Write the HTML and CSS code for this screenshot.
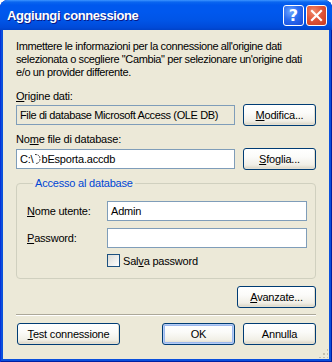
FILE: index.html
```html
<!DOCTYPE html>
<html lang="it">
	<head>
		<meta charset="UTF-8" />
		<meta name="viewport" content="width=device-width, initial-scale=1.0" />
		<title>Aggiungi connessione</title>
		<link rel="stylesheet" href="styles.css">
	</head>
	<body>
		<div class="window">
			<div class="titlebar">
				<span class="title">Aggiungi connessione</span>
				<div class="caption-btns">
					<button class="cap help">?</button>
					<button class="cap close">
						<svg width="13" height="13" viewBox="0 0 13 13">
							<path d="M2 2 L11 11 M11 2 L2 11" stroke="#fff" stroke-width="2.2" stroke-linecap="square" />
						</svg>
					</button>
				</div>
			</div>
			<div class="client">
				<p class="intro">Immettere le informazioni per la connessione all'origine dati selezionata o scegliere "Cambia" per selezionare un'origine dati e/o un provider differente.</p>

				<div class="lbl lbl-first"><u>O</u>rigine dati:</div>
				<div class="row row-first">
					<div class="field readonly">File di database Microsoft Access (OLE DB)</div>
					<button class="btn"><u>M</u>odifica...</button>
				</div>

				<div class="lbl">No<u>m</u>e file di database:</div>
				<div class="row">
					<div class="field">C:\<svg class="caret" width="7" height="12" viewBox="0 0 7 12"><path d="M1 1.5 Q6 1.5 6 6 Q6 10.5 1 10.5" fill="none" stroke="#222" stroke-width="1" stroke-dasharray="1.5 1" /></svg>bEsporta.accdb</div>
					<button class="btn"><u>S</u>foglia...</button>
				</div>

				<fieldset class="group">
					<legend>Accesso al database</legend>
					<div class="frow">
						<span class="flbl"><u>N</u>ome utente:</span>
						<div class="field">Admin</div>
					</div>
					<div class="frow">
						<span class="flbl"><u>P</u>assword:</span>
						<div class="field"></div>
					</div>
					<div class="check">
						<span class="box"></span>
						<span>Sal<u>v</u>a password</span>
					</div>
				</fieldset>

				<div class="adv-row">
					<button class="btn btn-adv"><u>A</u>vanzate...</button>
				</div>

				<div class="sep"></div>

				<div class="bottom">
					<button class="btn btn-test"><u>T</u>est connessione</button>
					<div class="spacer"></div>
					<button class="btn btn-ok">OK</button>
					<button class="btn">Annulla</button>
				</div>
				<div class="grip"></div>
			</div>
		</div>
	</body>
</html>
```

FILE: styles.css
```css
body {
	margin: 0;
	background: #fff;
	font-family: "Liberation Sans", Arial, sans-serif;
	font-size: 11px;
	letter-spacing: -0.2px;
	color: #000;
}

.window {
	width: 332px;
	height: 362px;
	box-sizing: border-box;
	display: flex;
	flex-direction: column;
	background: #0a50dc;
	border-radius: 8px 8px 0 0;
	box-shadow: inset 1px 0 0 #0831d9, inset -1px 0 0 #001ea0, inset 0 -1px 0 #001ea0;
}

.titlebar {
	height: 30px;
	display: flex;
	align-items: center;
	padding: 0 5px 0 7px;
	border-radius: 8px 8px 0 0;
	background: linear-gradient(to bottom, #3d95ff 0, #0a66f0 2px, #0058ee 5px, #0058ee 40%, #0054e6 70%, #004ad8 92%, #0042c8 100%);
	box-sizing: border-box;
}

.title {
	flex: 1;
	color: #fff;
	font-weight: bold;
	font-size: 13px;
	letter-spacing: -0.4px;
	text-shadow: 1px 1px 0 #0a1883;
	padding-top: 1px;
}

.caption-btns {
	display: flex;
	gap: 2px;
}

.cap {
	width: 21px;
	height: 21px;
	padding: 0;
	border: 1px solid #fff;
	border-radius: 3px;
	display: flex;
	align-items: center;
	justify-content: center;
	color: #fff;
	font-family: "DejaVu Sans", sans-serif;
	font-weight: bold;
	font-size: 16px;
}

.help {
	background: radial-gradient(circle at 35% 30%, #6ea5ff 0, #2a6cf0 45%, #1848d8 100%);
}

.close {
	background: radial-gradient(circle at 35% 30%, #f28c6c 0, #e0563b 45%, #c9391e 100%);
}

.client {
	position: relative;
	flex: 1;
	margin: 0 3px 3px 3px;
	background: #ece9d8;
	padding: 10px 13px 0 13px;
	display: flex;
	flex-direction: column;
}

.intro {
	margin: 0;
	line-height: 13px;
	width: 300px;
	letter-spacing: -0.38px;
}

.lbl {
	margin-top: 7px;
	line-height: 13px;
}

.lbl-first {
	margin-top: 11px;
}

.row {
	display: flex;
	align-items: center;
	gap: 8px;
	margin-top: 2px;
}

.row-first {
	margin-top: 1px;
}

.field {
	box-sizing: border-box;
	height: 20px;
	border: 1px solid #7f9db9;
	background: #fff;
	padding: 0 3px;
	display: flex;
	align-items: center;
	white-space: nowrap;
	overflow: hidden;
}

.row .field {
	width: 219px;
}

.field.readonly {
	background: #ece9d8;
	letter-spacing: -0.38px;
}

.caret {
	margin: 0 0 0 1px;
}

.btn {
	box-sizing: border-box;
	height: 22px;
	width: 73px;
	padding: 0;
	font-family: inherit;
	font-size: 11px;
	letter-spacing: inherit;
	color: #000;
	border: 1px solid #003c74;
	border-radius: 3px;
	background: linear-gradient(to bottom, #fff 0, #fbfbf9 40%, #f1efe6 80%, #d8d2c2 100%);
	box-shadow: inset -1px -1px 0 #e3dfd2;
}

.group {
	margin: 7px 0 0 0;
	padding: 11px 8px 11px 10px;
	border: 1px solid #d0d0bf;
	border-radius: 4px;
}

.group legend {
	color: #0046d5;
	padding: 0 2px;
	margin-left: 6px;
	line-height: 13px;
}

.frow {
	display: flex;
	align-items: center;
	margin-bottom: 7px;
}

.flbl {
	width: 80px;
}

.frow .field {
	width: 200px;
}

.check {
	display: flex;
	align-items: center;
	gap: 3px;
	margin-left: 80px;
	margin-top: -1px;
	height: 13px;
}

.box {
	width: 11px;
	height: 11px;
	border: 1px solid #1c5180;
	background: linear-gradient(135deg, #dcdcd7 0, #fff 100%);
}

.adv-row {
	display: flex;
	justify-content: flex-end;
	margin-top: 7px;
}

.btn-adv {
	width: 79px;
}

.sep {
	margin-top: 6px;
	height: 1px;
	background: #aca899;
	border-bottom: 1px solid #fff;
}

.bottom {
	display: flex;
	gap: 8px;
	margin-top: 7px;
	padding-left: 1px;
}

.btn-test {
	width: 103px;
}

.spacer {
	flex: 1;
}

.btn-ok {
	box-shadow: inset 0 0 0 1px #b6cdf5, inset 0 0 0 2px #9bb8ee;
}

.grip {
	position: absolute;
	right: 1px;
	bottom: 1px;
	width: 10px;
	height: 10px;
	background-image: radial-gradient(circle, #c3bfaf 1px, transparent 1.2px);
	background-size: 4px 4px;
	clip-path: polygon(100% 0, 100% 100%, 0 100%);
}
```
